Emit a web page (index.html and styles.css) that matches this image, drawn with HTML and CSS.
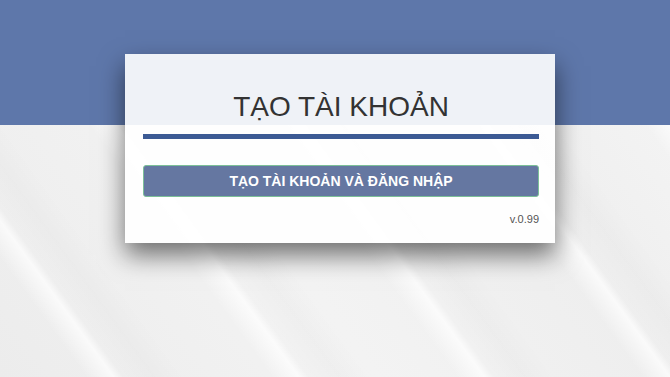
FILE: index.html
```html
<!DOCTYPE html>
<html lang="vi">
  <head>
    <meta charset="UTF-8" />
    <meta name="viewport" content="width=device-width, initial-scale=1.0" />
    <title>Tạo tài khoản</title>
    <link rel="stylesheet" href="styles.css">
  </head>
  <body>
    <div class="page">
      <div class="card">
        <div class="card-header">
          <h1 class="title">TẠO TÀI KHOẢN</h1>
        </div>
        <div class="divider"></div>
        <button class="btn-create" type="button">TẠO TÀI KHOẢN VÀ ĐĂNG NHẬP</button>
        <div class="version">v.0.99</div>
      </div>
    </div>
  </body>
</html>
```

FILE: styles.css
```css
* {
  margin: 0;
  padding: 0;
  box-sizing: border-box;
}

html,
body {
  height: 100%;
}

body {
  font-family: "Liberation Sans", Arial, sans-serif;
  background-color: #f0f0f0;
  background-image:
    linear-gradient(#5e77aa, #5e77aa),
    repeating-linear-gradient(54deg, rgba(255, 255, 255, 0) 0, rgba(255, 255, 255, 0) 70px, rgba(255, 255, 255, 0.7) 92px, rgba(255, 255, 255, 0) 100px, rgba(0, 0, 0, 0.015) 125px, rgba(255, 255, 255, 0) 150px),
    linear-gradient(54deg, #ececec 0%, #f3f3f3 40%, #eeeeee 70%, #f6f6f6 100%);
  background-size: 100% 125px, 100% 100%, 100% 100%;
  background-repeat: no-repeat;
  overflow: hidden;
}

.page {
  display: flex;
  justify-content: center;
  padding: 54px 0 0 10px;
}

.card {
  width: 430px;
  padding: 0 16px 17px 18px;
  background-color: rgba(255, 255, 255, 0.9);
  box-shadow: 0 12px 24px rgba(0, 0, 0, 0.55);
}

.card-header {
  padding-top: 37px;
  text-align: center;
}

.title {
  font-size: 28px;
  line-height: 32px;
  font-weight: normal;
  color: #333;
}

.divider {
  height: 5px;
  margin-top: 11px;
  background-color: #3c5a94;
}

.btn-create {
  display: block;
  width: 100%;
  height: 32px;
  margin-top: 26px;
  background-color: #6577a1;
  border: 1px solid #7cbf98;
  border-radius: 3px;
  color: #fff;
  font-family: inherit;
  font-size: 14px;
  font-weight: bold;
  cursor: pointer;
}

.version {
  margin-top: 15px;
  text-align: right;
  font-size: 11px;
  line-height: 14px;
  color: #555;
}
```
